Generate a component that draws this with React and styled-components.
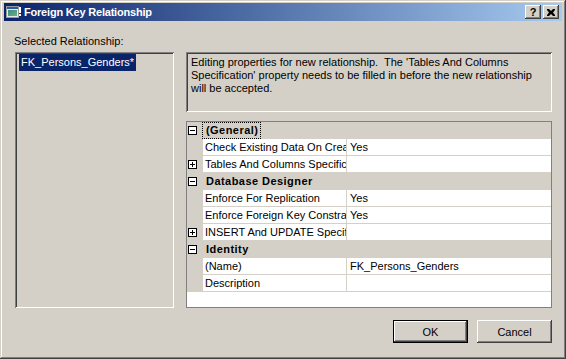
import React from "react";
import styled, { createGlobalStyle } from "styled-components";

const Global = createGlobalStyle`
  html, body { margin: 0; padding: 0; background: #d4d0c8; }
  * { box-sizing: border-box; }
`;

const raised = `
  box-shadow: inset -1px -1px #404040, inset 1px 1px #ffffff,
    inset -2px -2px #808080, inset 2px 2px #d4d0c8;
`;
const sunken = `
  box-shadow: inset 1px 1px #808080, inset -1px -1px #ffffff,
    inset 2px 2px #404040, inset -2px -2px #d4d0c8;
`;

const Window = styled.div`
  width: 566px;
  height: 359px;
  background: #d4d0c8;
  padding: 3px 4px 4px 4px;
  display: flex;
  flex-direction: column;
  font-family: "Liberation Sans", Arial, sans-serif;
  font-size: 11px;
  color: #000;
  box-shadow: inset -1px -1px #404040, inset 1px 1px #d4d0c8,
    inset -2px -2px #808080, inset 2px 2px #ffffff;
`;

const TitleBar = styled.div`
  height: 18px;
  flex: none;
  display: flex;
  align-items: center;
  padding: 0 3px 0 2px;
  background: linear-gradient(to right, #0a246a, #a6caf0);
`;

const TitleText = styled.div`
  flex: 1;
  margin-left: 2px;
  color: #fff;
  font-weight: bold;
  font-size: 11px;
  letter-spacing: -0.2px;
  white-space: nowrap;
`;

const CaptionButton = styled.div`
  width: 16px;
  height: 14px;
  margin-left: ${(p) => (p.$gap ? "2px" : "0")};
  background: #d4d0c8;
  ${raised}
  display: flex;
  align-items: center;
  justify-content: center;
  font-weight: bold;
  font-size: 11px;
  line-height: 14px;
  color: #000;
`;

const Body = styled.div`
  flex: 1;
  display: flex;
  flex-direction: column;
  padding: 13px 10px 12px 11px;
`;

const Main = styled.div`
  flex: 1;
  display: flex;
  gap: 12px;
`;

const LeftColumn = styled.div`
  width: 159px;
  display: flex;
  flex-direction: column;
`;

const Label = styled.div`
  height: 18px;
  margin-left: -1px;
  line-height: 14px;
  white-space: nowrap;
`;

const ListBox = styled.div`
  flex: 1;
  background: #d4d0c8;
  padding: 2px 4px;
  ${sunken}
`;

const ListItem = styled.div`
  display: inline-block;
  height: 17px;
  line-height: 17px;
  padding: 0 2px;
  background: ${(p) => (p.$selected ? "#0a246a" : "transparent")};
  color: ${(p) => (p.$selected ? "#fff" : "#000")};
  white-space: nowrap;
`;

const RightColumn = styled.div`
  flex: 1;
  display: flex;
  flex-direction: column;
  padding-top: 18px;
`;

const Description = styled.div`
  height: 60px;
  flex: none;
  padding: 4px 5px;
  line-height: 13px;
  white-space: pre;
  overflow: hidden;
  ${sunken}
`;

const Grid = styled.div`
  flex: 1;
  margin-top: 9px;
  background: #fff;
  border: 1px solid #808080;
  display: flex;
  flex-direction: column;
`;

const CategoryRow = styled.div`
  height: 17px;
  flex: none;
  display: flex;
  align-items: center;
  background: #d4d0c8;
`;

const DataRow = styled.div`
  height: 17px;
  flex: none;
  display: flex;
`;

const Margin = styled.div`
  width: 16px;
  flex: none;
  align-self: stretch;
  background: #d4d0c8;
  display: flex;
  align-items: center;
  padding-left: 1px;
`;

const Expander = styled.div`
  width: 9px;
  height: 9px;
  border: 1px solid #000;
  background: #fff;
  position: relative;
  &::before {
    content: "";
    position: absolute;
    left: 1px;
    top: 3px;
    width: 5px;
    height: 1px;
    background: #000;
  }
  &::after {
    content: "";
    display: ${(p) => (p.$open ? "none" : "block")};
    position: absolute;
    left: 3px;
    top: 1px;
    width: 1px;
    height: 5px;
    background: #000;
  }
`;

const CategoryLabel = styled.div`
  height: 17px;
  line-height: 15px;
  margin-left: -1px;
  padding: 0 2px 0 3px;
  font-weight: bold;
  letter-spacing: 0.45px;
  border: 1px dotted ${(p) => (p.$focused ? "#000" : "transparent")};
  white-space: nowrap;
`;

const NameCell = styled.div`
  width: 143px;
  flex: none;
  padding-left: 2px;
  line-height: 16px;
  border-bottom: 1px solid #d4d0c8;
  white-space: nowrap;
  overflow: hidden;
`;

const ValueCell = styled.div`
  flex: 1;
  padding-left: 3px;
  line-height: 16px;
  border-left: 1px solid #d4d0c8;
  border-bottom: 1px solid #d4d0c8;
  white-space: nowrap;
  overflow: hidden;
`;

const ButtonRow = styled.div`
  display: flex;
  justify-content: flex-end;
  gap: 9px;
  margin-top: 12px;
`;

const Button = styled.div`
  width: 75px;
  height: 23px;
  display: flex;
  align-items: center;
  justify-content: center;
  background: #d4d0c8;
  border: ${(p) => (p.$default ? "1px solid #000" : "none")};
  ${raised}
`;

const TitleIcon = () => (
  <svg width="16" height="14" viewBox="0 0 16 14">
    <defs>
      <linearGradient id="ig" x1="0" y1="0" x2="1" y2="1">
        <stop offset="0" stopColor="#3a8a8a" />
        <stop offset="1" stopColor="#6cb07a" />
      </linearGradient>
    </defs>
    <rect x="0.5" y="1.5" width="12" height="11" fill="#e8e8e8" stroke="#9a9a9a" />
    <rect x="1" y="2" width="11" height="2" fill="#2a5aa8" />
    <rect x="2" y="5" width="9" height="6" fill="url(#ig)" />
    <rect x="13" y="2" width="2" height="6" fill="#ffffff" />
    <rect x="13" y="9" width="2" height="2" fill="#ffffff" />
  </svg>
);

const CloseGlyph = () => (
  <svg width="8" height="7" viewBox="0 0 8 7">
    <path d="M0 0h2l2 2 2-2h2v1L6 3.5 8 6v1H6L4 5 2 7H0V6l2-2.5L0 1z" fill="#000" />
  </svg>
);

const rows = [
  { type: "cat", label: "(General)", focused: true },
  { type: "row", label: "Check Existing Data On Create Or Re-Enabling", value: "Yes" },
  { type: "row", label: "Tables And Columns Specification", value: "", expandable: true },
  { type: "cat", label: "Database Designer" },
  { type: "row", label: "Enforce For Replication", value: "Yes" },
  { type: "row", label: "Enforce Foreign Key Constraint", value: "Yes" },
  { type: "row", label: "INSERT And UPDATE Specification", value: "", expandable: true },
  { type: "cat", label: "Identity" },
  { type: "row", label: "(Name)", value: "FK_Persons_Genders" },
  { type: "row", label: "Description", value: "" },
];

export default function App() {
  return (
    <>
      <Global />
      <Window>
        <TitleBar>
          <TitleIcon />
          <TitleText>Foreign Key Relationship</TitleText>
          <CaptionButton>?</CaptionButton>
          <CaptionButton $gap>
            <CloseGlyph />
          </CaptionButton>
        </TitleBar>
        <Body>
          <Main>
            <LeftColumn>
              <Label>Selected Relationship:</Label>
              <ListBox>
                <ListItem $selected>FK_Persons_Genders*</ListItem>
              </ListBox>
            </LeftColumn>
            <RightColumn>
              <Description>
                {"Editing properties for new relationship.  The 'Tables And Columns\nSpecification' property needs to be filled in before the new relationship\nwill be accepted."}
              </Description>
              <Grid>
                {rows.map((r, i) =>
                  r.type === "cat" ? (
                    <CategoryRow key={i}>
                      <Margin>
                        <Expander $open />
                      </Margin>
                      <CategoryLabel $focused={r.focused}>{r.label}</CategoryLabel>
                    </CategoryRow>
                  ) : (
                    <DataRow key={i}>
                      <Margin>{r.expandable && <Expander />}</Margin>
                      <NameCell>{r.label}</NameCell>
                      <ValueCell>{r.value}</ValueCell>
                    </DataRow>
                  )
                )}
              </Grid>
            </RightColumn>
          </Main>
          <ButtonRow>
            <Button $default>OK</Button>
            <Button>Cancel</Button>
          </ButtonRow>
        </Body>
      </Window>
    </>
  );
}
